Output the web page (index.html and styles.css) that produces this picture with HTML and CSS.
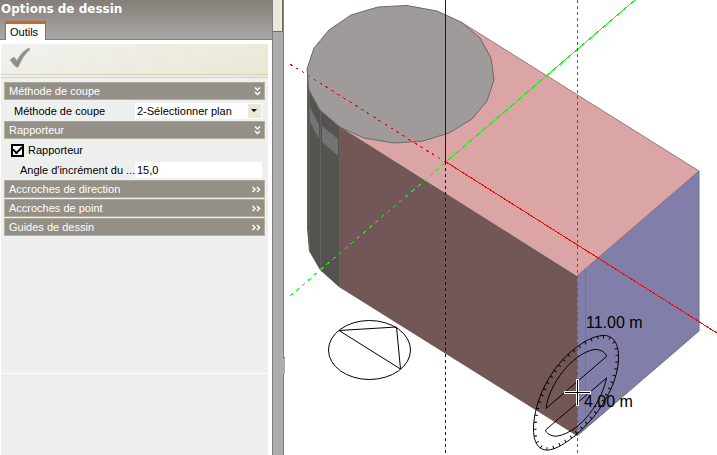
FILE: index.html
```html
<!DOCTYPE html>
<html lang="fr">
<head>
<meta charset="utf-8">
<title>Options de dessin</title>
<link rel="stylesheet" href="styles.css">
</head>
<body>
<div class="app">
  <aside class="dock">
    <div class="panel">
      <header class="panel-head">
        <h1>Options de dessin</h1>
        <button class="tab" type="button">Outils</button>
      </header>
      <div class="toolbar">
        <button class="apply" type="button" aria-label="Appliquer">
          <svg width="22" height="20" viewBox="0 0 22 20"><path d="M1 12 L5 9 L8 13 Q12 4 20 0 L21 1 Q14 7 9 19 L7 19 Z" fill="#8f8c84" stroke="#aaa79c"/></svg>
        </button>
      </div>
      <form class="options">
        <button class="section" type="button">Méthode de coupe
          <svg width="7" height="9" viewBox="0 0 7 9"><path d="M1 0.5 L3.5 3 L6 0.5 M1 5 L3.5 7.5 L6 5"/></svg>
        </button>
        <div class="row">
          <label for="cut">Méthode de coupe</label>
          <span class="picker"><select id="cut"><option>2-Sélectionner plan</option></select></span>
        </div>
        <button class="section" type="button">Rapporteur
          <svg width="7" height="9" viewBox="0 0 7 9"><path d="M1 0.5 L3.5 3 L6 0.5 M1 5 L3.5 7.5 L6 5"/></svg>
        </button>
        <div class="row check">
          <input id="prot" type="checkbox" checked><label for="prot">Rapporteur</label>
        </div>
        <div class="row angle">
          <label for="angle">Angle d'incrément du ...</label>
          <input id="angle" type="text" value="15,0">
        </div>
        <button class="section" type="button">Accroches de direction
          <svg width="9" height="7" viewBox="0 0 9 7"><path d="M0.5 1 L3 3.5 L0.5 6 M5 1 L7.5 3.5 L5 6"/></svg>
        </button>
        <button class="section" type="button">Accroches de point
          <svg width="9" height="7" viewBox="0 0 9 7"><path d="M0.5 1 L3 3.5 L0.5 6 M5 1 L7.5 3.5 L5 6"/></svg>
        </button>
        <button class="section" type="button">Guides de dessin
          <svg width="9" height="7" viewBox="0 0 9 7"><path d="M0.5 1 L3 3.5 L0.5 6 M5 1 L7.5 3.5 L5 6"/></svg>
        </button>
      </form>
      <div class="lower"></div>
    </div>
    <div class="gutter"><div class="thumb"></div><div class="grip"></div></div>
  </aside>
  <main class="scene">
    <svg viewBox="285 0 432 455" preserveAspectRatio="xMinYMin slice">
      <defs>
        <path id="ring" d="M603 335.500 C613 335 619 343 618.500 359 C618 379 606 403 590 421 C577 436 557 451 546 450 C536 449 532 438 534 421 C537 395 552 367 573 350 C584 341 594 336 603 335.500 Z"/>
        <clipPath id="inside"><use href="#ring"/></clipPath>
      </defs>
      <!-- solid -->
      <path d="M461 22 L699 171 L577 276 L339 126 Z" fill="#dba5a5"/>
      <path d="M339 126 L577 276 V436 L339 287 Z" fill="#735757"/>
      <path d="M577 276 L699 171 V331 L577 436 Z" fill="#817fa9"/>
      <path d="M307 68 L309 90 L320 110 L339 126 V287 L320 270 L309 251 L307 228 Z" fill="#545350"/>
      <path d="M307.500 68 V228 M309.500 90 V250 M320.500 110 V270 M339.500 127 V287" fill="none" stroke="#62615f"/>
      <path d="M310 107 L319 125 V139 L310 122 Z M322 126 L338 139 V156 L322 142 Z" fill="#737373"/>
      <path d="M461 22 L699 171" fill="none" stroke="#967878"/>
      <path d="M699 171 L577 276" fill="none" stroke="#8b6d72"/>
      <path d="M699 171 V331 L577 436" fill="none" stroke="#706e93"/>
      <path d="M585.500 269 V429" stroke="#74738e" fill="none"/>
      <path d="M307 69 L314 48 L329 30 L351 15 L378 7 L407 5.500 L437 11 L461 22 L480 38 L491 58 L494 80 L487 101 L472 119 L449 133 L423 141 L394 143 L364 138 L340 127 L320 110 L309 90 Z" fill="#9f9b9a" stroke="#6b6867"/>
      <!-- axes -->
      <g fill="none" shape-rendering="crispEdges">
        <path d="M445.500 0 V162" stroke="#00f"/>
        <path d="M445.500 162 V455" stroke="#0000b0" stroke-dasharray="3 3"/>
        <path d="M446 162 L717 333" stroke="#f00"/>
        <path d="M290 64 L445 162" stroke="#f00" stroke-dasharray="3 4"/>
        <path d="M446 162 L635 0" stroke="#0f0"/>
        <path d="M290 296 L445 163" stroke="#0f0" stroke-dasharray="4 4"/>
        <path d="M577.500 0 V455" stroke="#5b5b5b" stroke-dasharray="3 3"/>
      </g>
      <!-- view compass -->
      <g fill="none" stroke="#000">
        <ellipse cx="369.500" cy="350" rx="41" ry="29.500"/>
        <path d="M339 330.500 L396.500 327 L400.500 369 Z"/>
      </g>
      <!-- protractor -->
      <g fill="none" stroke="#000">
        <use href="#ring"/>
        <use href="#ring" clip-path="url(#inside)" stroke-width="6" stroke-dasharray="1 6"/>
        <path d="M546 408.500 C549 384 572 354 594 349.500 C601 349 606 353 606.500 356.500 Z"/>
        <path d="M606.500 378 C602 401 582 431 558 436 C551 437 546 433 545.500 430 Z"/>
      </g>
      <g class="measure">
        <text x="586" y="328">11.00 m</text>
        <text x="584" y="407">4.00 m</text>
      </g>
      <!-- cursor -->
      <circle cx="577.500" cy="392.500" r="3" fill="#f00"/>
      <path d="M564 392.500 H591 M577.500 379 V406" stroke="#fff" stroke-width="3"/>
      <path d="M565 392.500 H590 M577.500 380 V405" stroke="#000"/>
    </svg>
  </main>
</div>
</body>
</html>
```
FILE: styles.css
```css
* { box-sizing: border-box; }
body {
  margin: 0;
  background: #fff;
  color: #000;
  font: 11px/16px "Liberation Sans", Arial, sans-serif;
}
button, input, select { font: inherit; color: inherit; border: 0; padding: 0; margin: 0; border-radius: 0; }
.app { display: flex; height: 100vh; overflow: hidden; }
.dock { display: flex; flex: 0 0 285px; min-width: 0; }
.panel { flex: 1; min-width: 0; display: flex; flex-direction: column; }
.panel-head {
  height: 40px;
  padding-top: 1px;
  background: linear-gradient(#857e78, #a9a8a7);
  border-bottom: 1px solid #7f7f7f;
  display: flex;
  flex-direction: column;
  justify-content: space-between;
  align-items: flex-start;
}
h1 { margin: 0 1px; color: #fff; font: bold 12px/16px "DejaVu Sans", Verdana, sans-serif; white-space: nowrap; }
.tab {
  height: 19px;
  margin: 0 0 -1px 5px;
  padding: 0 7px 0 4px;
  background: #fff;
  border: 1px solid #777;
  border-top: 3px solid #d06818;
  border-bottom: 0;
  line-height: 15px;
}
.toolbar {
  height: 34px;
  margin: 4px 4px 0 1px;
  background: linear-gradient(165deg, #f1f2f1, #ebe7d4);
  border-bottom: 4px double #d8d2b8;
}
.apply { display: block; margin: 4px 8px; height: 20px; background: none; }
.apply svg { display: block; }
.options {
  flex: 0 0 296px;
  margin: 0 4px 0 1px;
  padding: 4px 3px;
  background: #eef0f0;
  border-bottom: 1px solid #fff;
}
.lower { flex: 1; margin: 0 4px 0 1px; background: #eee; }
.section {
  display: flex;
  justify-content: space-between;
  align-items: center;
  width: 100%;
  height: 18px;
  margin-bottom: 1px;
  padding: 0 3px 0 4px;
  background: #949088;
  color: #fff;
  border: 1px solid #b7b19c;
  border-top-color: #aaa699;
}
.section svg { fill: none; stroke: #fff; stroke-width: 1.5; }
.row { display: flex; align-items: center; height: 20px; padding: 0 3px 0 10px; }
.row label { flex: 1; min-width: 0; white-space: nowrap; }
.picker { position: relative; flex: 0 0 127px; height: 16px; background: #fff; }
.picker select { appearance: none; display: block; width: 100%; height: 16px; padding: 0 2px; background: #fff; }
.picker::before {
  content: "";
  position: absolute;
  right: 1px;
  top: 1px;
  width: 13px;
  height: 14px;
  background: #ebe8d8;
  pointer-events: none;
}
.picker::after {
  content: "";
  position: absolute;
  right: 5px;
  top: 6px;
  border: 3px solid transparent;
  border-top-color: #000;
  border-bottom: 0;
  pointer-events: none;
}
.check { padding-left: 7px; gap: 4px; }
.check input {
  appearance: none;
  width: 13px;
  height: 13px;
  border: 2px solid #000;
  background: #fff;
  display: grid;
  place-items: center;
}
.check input:checked::after {
  content: "";
  width: 7px;
  height: 4px;
  border: solid #000;
  border-width: 0 0 2px 2px;
  transform: translateY(-1px) rotate(-45deg);
}
.angle { padding-left: 16px; }
.angle input { flex: 0 0 127px; width: 127px; height: 16px; padding: 0 2px; background: #fff; }
.gutter {
  flex: 0 0 12px;
  margin-right: 1px;
  background: #adadad;
  border: solid #7f7f7f;
  border-width: 0 1px;
  position: relative;
}
.thumb { height: 32px; background: #ece9d8; border: solid #716f64; border-width: 0 1px 1px 0; }
.grip { position: absolute; left: 10px; top: 357px; width: 2px; height: 17px; background: #adadad; border-top: 1px solid #7f7f7f; }
.scene { flex: 1; min-width: 0; }
.scene svg { display: block; width: 100%; height: 100%; }
.measure { font: 16px "Liberation Sans", Arial, sans-serif; }
```
